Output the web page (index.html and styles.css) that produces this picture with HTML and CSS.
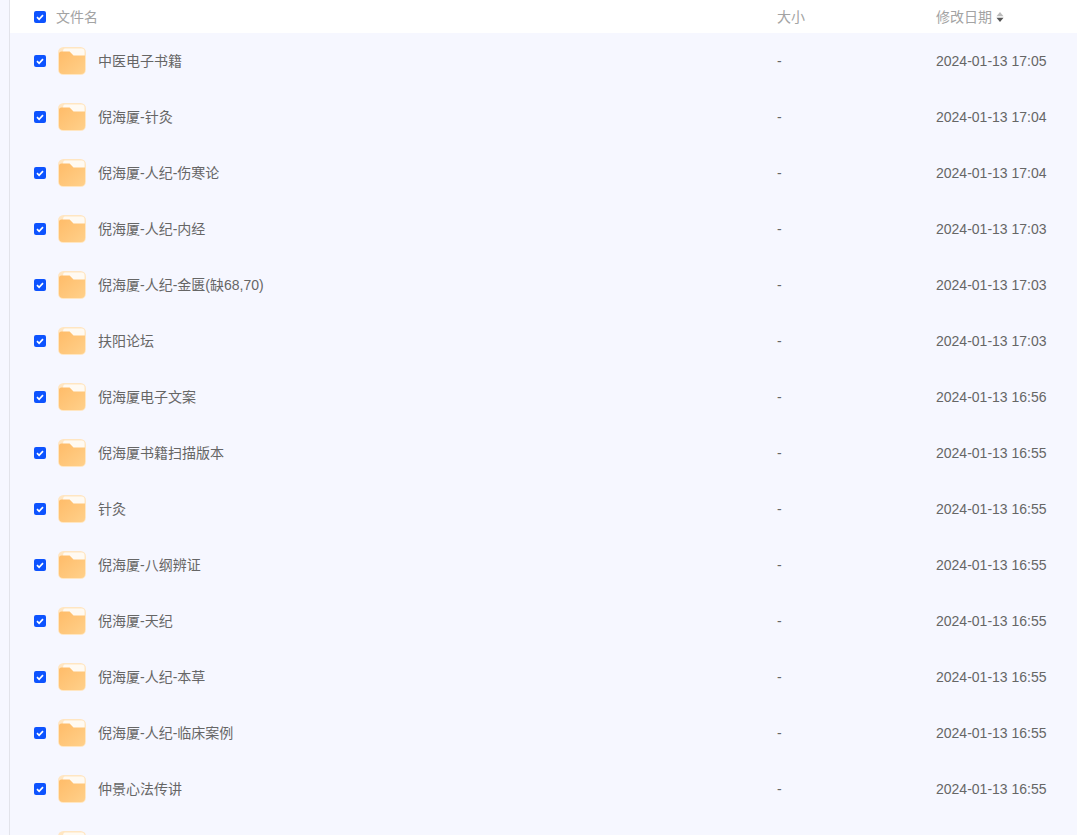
FILE: index.html
```html
<!DOCTYPE html>
<html lang="zh-CN">
<head>
<meta charset="utf-8">
<title>文件列表</title>
<link rel="stylesheet" href="styles.css">
</head>
<body>
<svg class="defs" width="0" height="0" aria-hidden="true">
  <defs>
    <linearGradient id="fg" x1="0" y1="0" x2="1" y2="1">
      <stop offset="0" stop-color="#ffbc69"/>
      <stop offset="1" stop-color="#ffd08a"/>
    </linearGradient>
    <symbol id="folder" viewBox="0 0 28 28">
      <rect x="0" y="0" width="28" height="28" rx="5.5" fill="#ffe6c2"/>
      <path d="M7 1.5H23.5A3 3 0 0 1 26.5 4.5V9.5H15L11 5.5H5C5 3 5.5 1.5 7 1.5Z" fill="#fffaf2"/>
      <path d="M1 7A2.5 2.5 0 0 1 3.5 4.5H11.6L15.5 8.6H27V23A4 4 0 0 1 23 27H5A4 4 0 0 1 1 23Z" fill="url(#fg)"/>
    </symbol>
    <symbol id="check" viewBox="0 0 12 12">
      <rect width="12" height="12" rx="2" fill="#0d53ff"/>
      <path d="M3 6.2 5.1 8.3 9 4.1" fill="none" stroke="#fff" stroke-width="1.7"/>
    </symbol>
  </defs>
</svg>
<main class="list">
  <div class="row head">
    <div class="c-name"><svg class="cb"><use href="#check"/></svg><span class="head-name">文件名</span></div>
    <div class="c-size">大小</div>
    <div class="c-date">修改日期<svg class="sort" viewBox="0 0 8 10"><path d="M4 0 7.5 4.3H.5Z" fill="#bbb"/><path d="M4 10 .5 5.7H7.5Z" fill="#555"/></svg></div>
  </div>
  <div class="row"><div class="c-name"><svg class="cb"><use href="#check"/></svg><svg class="fd"><use href="#folder"/></svg><span>中医电子书籍</span></div><div class="c-size">-</div><div class="c-date">2024-01-13 17:05</div></div>
  <div class="row"><div class="c-name"><svg class="cb"><use href="#check"/></svg><svg class="fd"><use href="#folder"/></svg><span>倪海厦-针灸</span></div><div class="c-size">-</div><div class="c-date">2024-01-13 17:04</div></div>
  <div class="row"><div class="c-name"><svg class="cb"><use href="#check"/></svg><svg class="fd"><use href="#folder"/></svg><span>倪海厦-人纪-伤寒论</span></div><div class="c-size">-</div><div class="c-date">2024-01-13 17:04</div></div>
  <div class="row"><div class="c-name"><svg class="cb"><use href="#check"/></svg><svg class="fd"><use href="#folder"/></svg><span>倪海厦-人纪-内经</span></div><div class="c-size">-</div><div class="c-date">2024-01-13 17:03</div></div>
  <div class="row"><div class="c-name"><svg class="cb"><use href="#check"/></svg><svg class="fd"><use href="#folder"/></svg><span>倪海厦-人纪-金匮(缺68,70)</span></div><div class="c-size">-</div><div class="c-date">2024-01-13 17:03</div></div>
  <div class="row"><div class="c-name"><svg class="cb"><use href="#check"/></svg><svg class="fd"><use href="#folder"/></svg><span>扶阳论坛</span></div><div class="c-size">-</div><div class="c-date">2024-01-13 17:03</div></div>
  <div class="row"><div class="c-name"><svg class="cb"><use href="#check"/></svg><svg class="fd"><use href="#folder"/></svg><span>倪海厦电子文案</span></div><div class="c-size">-</div><div class="c-date">2024-01-13 16:56</div></div>
  <div class="row"><div class="c-name"><svg class="cb"><use href="#check"/></svg><svg class="fd"><use href="#folder"/></svg><span>倪海厦书籍扫描版本</span></div><div class="c-size">-</div><div class="c-date">2024-01-13 16:55</div></div>
  <div class="row"><div class="c-name"><svg class="cb"><use href="#check"/></svg><svg class="fd"><use href="#folder"/></svg><span>针灸</span></div><div class="c-size">-</div><div class="c-date">2024-01-13 16:55</div></div>
  <div class="row"><div class="c-name"><svg class="cb"><use href="#check"/></svg><svg class="fd"><use href="#folder"/></svg><span>倪海厦-八纲辨证</span></div><div class="c-size">-</div><div class="c-date">2024-01-13 16:55</div></div>
  <div class="row"><div class="c-name"><svg class="cb"><use href="#check"/></svg><svg class="fd"><use href="#folder"/></svg><span>倪海厦-天纪</span></div><div class="c-size">-</div><div class="c-date">2024-01-13 16:55</div></div>
  <div class="row"><div class="c-name"><svg class="cb"><use href="#check"/></svg><svg class="fd"><use href="#folder"/></svg><span>倪海厦-人纪-本草</span></div><div class="c-size">-</div><div class="c-date">2024-01-13 16:55</div></div>
  <div class="row"><div class="c-name"><svg class="cb"><use href="#check"/></svg><svg class="fd"><use href="#folder"/></svg><span>倪海厦-人纪-临床案例</span></div><div class="c-size">-</div><div class="c-date">2024-01-13 16:55</div></div>
  <div class="row"><div class="c-name"><svg class="cb"><use href="#check"/></svg><svg class="fd"><use href="#folder"/></svg><span>仲景心法传讲</span></div><div class="c-size">-</div><div class="c-date">2024-01-13 16:55</div></div>
  <div class="row"><div class="c-name"><svg class="cb"><use href="#check"/></svg><svg class="fd"><use href="#folder"/></svg><span></span></div><div class="c-size"></div><div class="c-date"></div></div>
</main>
</body>
</html>
```

FILE: styles.css
```css
html, body {
  margin: 0;
  height: 100%;
  overflow: hidden;
  background: #f6f7ff;
}
body {
  font-family: "Liberation Sans", "Noto Sans CJK SC", sans-serif;
  font-size: 14px;
  line-height: 20px;
  color: #666;
}
.defs {
  display: block;
  height: 0;
}
.list {
  margin-left: 9px;
  border-left: 1px solid #e2e3ea;
  height: 835px;
  overflow: hidden;
}
.row {
  display: grid;
  grid-template-columns: 743px 159px 1fr;
  align-items: center;
  height: 56px;
  padding-left: 24px;
}
.row.head {
  height: 33px;
  background: #fff;
  color: #a3a3a3;
}
.c-name {
  display: flex;
  align-items: center;
}
.c-date {
  display: flex;
  align-items: center;
}
.cb {
  width: 12px;
  height: 12px;
  flex: none;
  margin-right: 12px;
}
.head-name {
  margin-left: -2px;
}
.fd {
  width: 28px;
  height: 28px;
  flex: none;
  margin-right: 12px;
}
.sort {
  width: 8px;
  height: 10px;
  margin-left: 4px;
  margin-top: 1px;
}
```
